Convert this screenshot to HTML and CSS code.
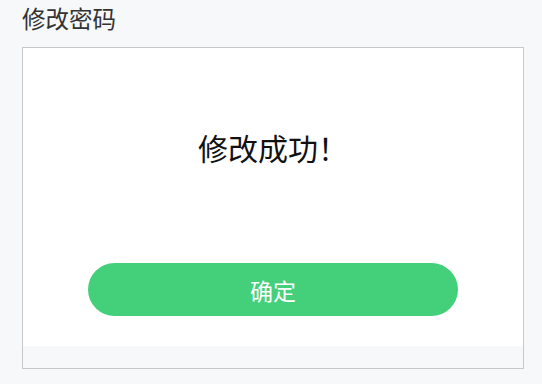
FILE: index.html
```html
<!DOCTYPE html>
<html lang="zh">
<head>
    <meta charset="UTF-8">
    <title>修改密码</title>
    <link rel="stylesheet" href="styles.css">
</head>
<body>
    <div class="page">
        <h1 class="page-title">修改密码</h1>
        <div class="panel">
            <div class="panel-body">
                <p class="message">修改成功！</p>
                <button class="confirm-btn">确定</button>
            </div>
            <div class="panel-foot"></div>
        </div>
    </div>
</body>
</html>
```

FILE: styles.css
```css
* {
    margin: 0;
    padding: 0;
    box-sizing: border-box;
}

html, body {
    height: 100%;
}

body {
    background-color: #f7f8fa;
    font-family: "Noto Sans CJK SC", "Noto Sans", sans-serif;
}

.page {
    padding: 2px 18px 0 22px;
}

.page-title {
    font-size: 23.5px;
    font-weight: normal;
    color: #333;
    line-height: 32px;
    height: 45px;
}

.panel {
    width: 502px;
    height: 322px;
    border: 1px solid #c8c8c8;
    display: flex;
    flex-direction: column;
}

.panel-body {
    flex: 1;
    background-color: #fff;
    display: flex;
    flex-direction: column;
    align-items: center;
}

.message {
    margin-top: 79px;
    font-size: 30px;
    line-height: 40px;
    color: #111;
}

.confirm-btn {
    margin-top: 96px;
    width: 370px;
    height: 53px;
    border: none;
    border-radius: 27px;
    background-color: #44d07a;
    color: #fff;
    font-family: inherit;
    font-size: 23px;
}

.panel-foot {
    height: 22px;
    background-color: #f7f8fa;
}
```
